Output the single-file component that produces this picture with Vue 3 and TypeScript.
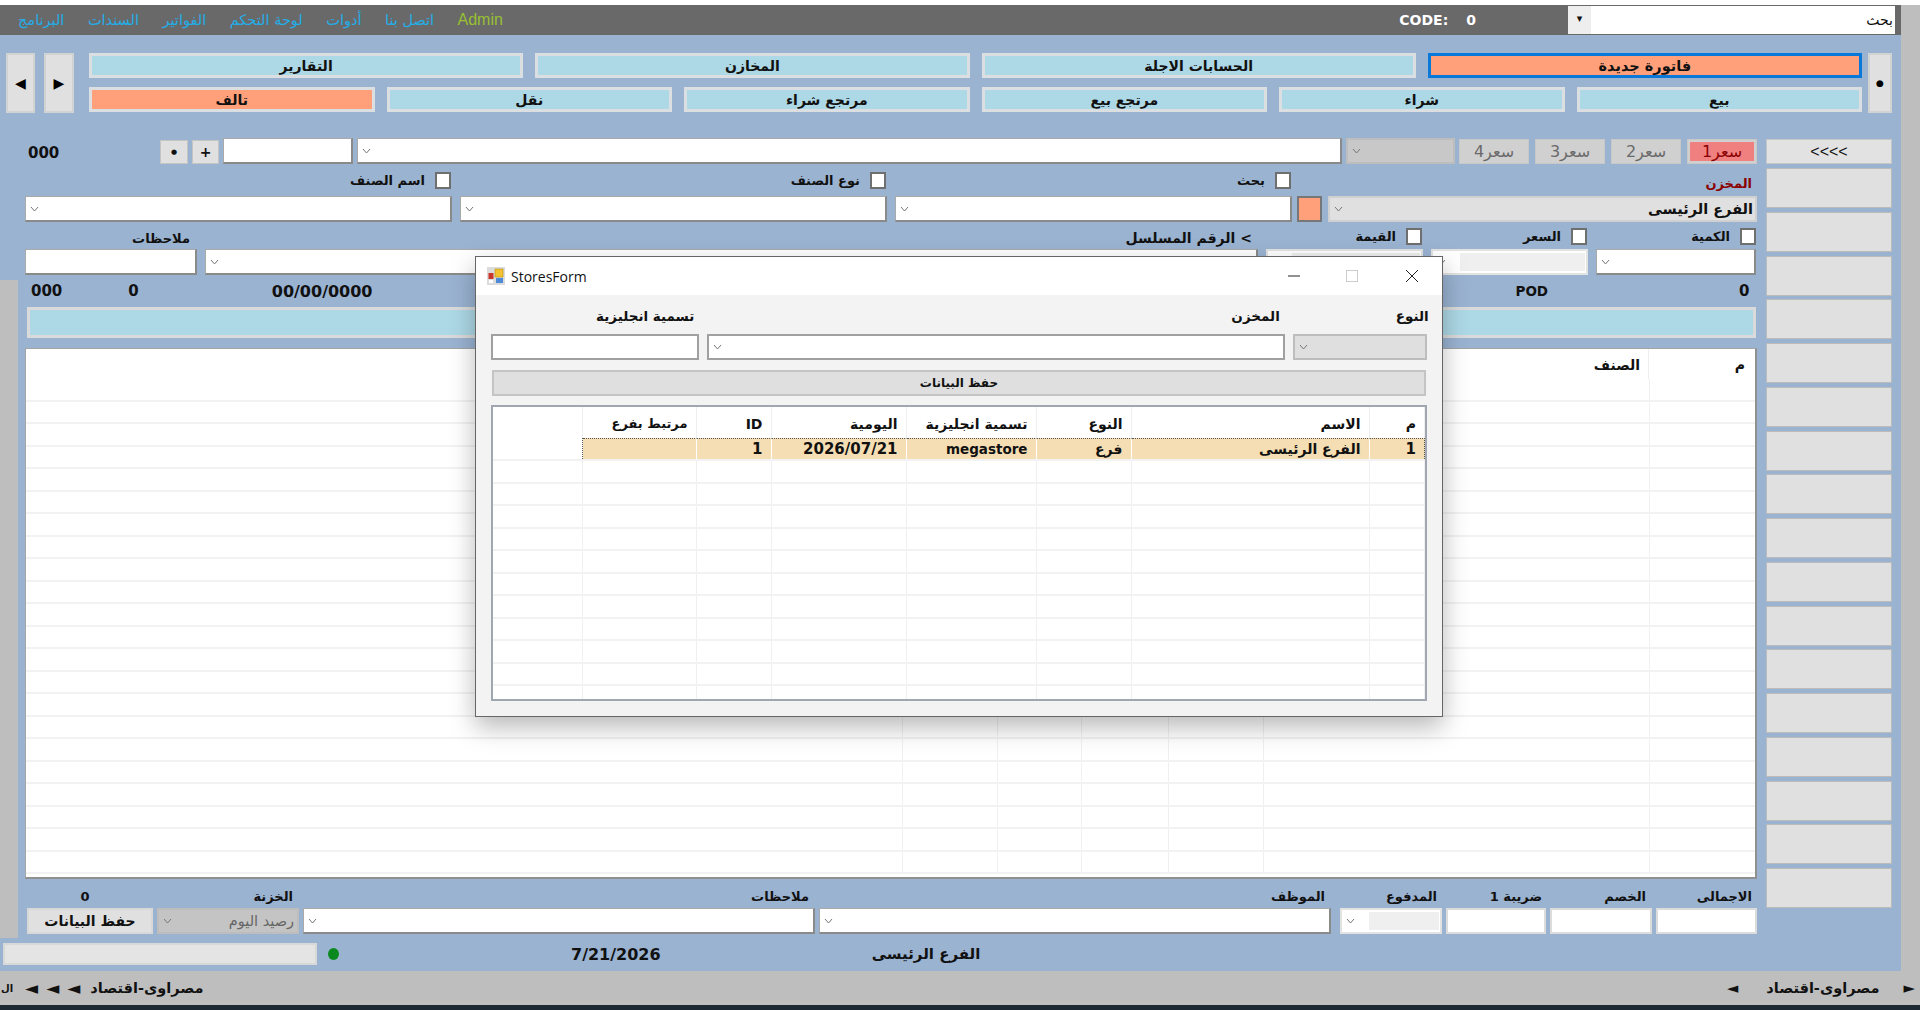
<script setup lang="ts">
const menu = ["البرنامج", "السندات", "الفواتير", "لوحة التحكم", "أدوات", "اتصل بنا"];
const topRow = ["التقارير", "المخازن", "الحسابات الاجلة", "فاتورة جديدة"];
const subRow = ["تالف", "نقل", "مرتجع شراء", "مرتجع بيع", "شراء", "بيع"];
const prices = ["سعر4", "سعر3", "سعر2", "سعر1"];
const sideButtons = Array.from({ length: 17 }, (_, i) => i);

const gridRows = Array.from({ length: 22 }, (_, i) => i);
const gridCols = 7;

const storeHead = ["", "مرتبط بفرع", "ID", "اليومية", "تسمية انجليزية", "النوع", "الاسم", "م"];
const storeRow = ["", "", "1", "2026/07/21", "megastore", "فرع", "الفرع الرئيسى", "1"];
const storeEmpty = Array.from({ length: 11 }, (_, i) => i);

const footLabels = [
  { text: "0", cls: "center" },
  { text: "الخزنة", cls: "pr6" },
  { text: "ملاحظات", cls: "pr6" },
  { text: "الموظف", cls: "pr6" },
  { text: "المدفوع", cls: "pr5" },
  { text: "ضريبة 1", cls: "pr4" },
  { text: "الخصم", cls: "pr6" },
  { text: "الاجمالى", cls: "pr5" },
];
</script>

<template>
  <div class="page">
    <div class="shell">
      <div class="left">
        <header class="topbar">
          <nav class="menu">
            <a v-for="m in menu" :key="m">{{ m }}</a>
            <a class="admin">Admin</a>
          </nav>
          <div class="code"><b>CODE:</b><b>0</b></div>
          <div class="search">
            <span class="drop">▾</span>
            <span class="search-text">بحث</span>
          </div>
        </header>

        <main class="main">
          <section class="toolbar">
            <button class="btn nav first">◀</button>
            <button class="btn nav second">▶</button>
            <div class="tool-rows">
              <div class="tools four">
                <button
                  v-for="(t, i) in topRow"
                  :key="t"
                  class="tool"
                  :class="{ focused: i === 3 }"
                >
                  {{ t }}
                </button>
              </div>
              <div class="tools six">
                <button
                  v-for="(t, i) in subRow"
                  :key="t"
                  class="tool"
                  :class="{ salmon: i === 0 }"
                >
                  {{ t }}
                </button>
              </div>
            </div>
            <button class="btn nav dot">●</button>
          </section>

          <section class="work">
            <div class="form">
              <div class="row row-a">
                <b class="num code-a">000</b>
                <button class="btn small w28">●</button>
                <button class="btn small w27 plus">+</button>
                <input class="field w130" />
                <div class="combo w985"><svg class="chev" viewBox="0 0 9 6"><path d="M1 1l3.5 4L8 1" /></svg></div>
                <div class="combo off w109"><svg class="chev" viewBox="0 0 9 6"><path d="M1 1l3.5 4L8 1" /></svg></div>
                <div class="prices">
                  <button v-for="(p, i) in prices" :key="p" class="price" :class="{ on: i === 3 }">
                    <span>{{ p }}</span>
                  </button>
                </div>
              </div>

              <div class="row row-b">
                <label class="check w427"><span class="txt">اسم الصنف</span><input type="checkbox" /></label>
                <label class="check w427"><span class="txt">نوع الصنف</span><input type="checkbox" /></label>
                <label class="check w397"><span class="txt">بحث</span><input type="checkbox" /></label>
                <span class="store-label txt">المخزن</span>
              </div>

              <div class="row row-c">
                <div class="combo w427"><svg class="chev" viewBox="0 0 9 6"><path d="M1 1l3.5 4L8 1" /></svg></div>
                <div class="combo w427"><svg class="chev" viewBox="0 0 9 6"><path d="M1 1l3.5 4L8 1" /></svg></div>
                <div class="combo w397"><svg class="chev" viewBox="0 0 9 6"><path d="M1 1l3.5 4L8 1" /></svg></div>
                <span class="swatch"></span>
                <div class="combo off w429">
                  <svg class="chev" viewBox="0 0 9 6"><path d="M1 1l3.5 4L8 1" /></svg>
                  <b class="txt combo-value">الفرع الرئيسى</b>
                </div>
              </div>

              <div class="row row-d">
                <b class="lbl txt w172 pr7 note">ملاحظات</b>
                <b class="lbl txt w1061 pr6 serial">> الرقم المسلسل</b>
                <label class="check w165"><span class="txt">القيمة</span><input type="checkbox" /></label>
                <label class="check w165"><span class="txt">السعر</span><input type="checkbox" /></label>
                <label class="check w169"><span class="txt">الكمية</span><input type="checkbox" /></label>
              </div>

              <div class="row row-e">
                <input class="field w172" />
                <div class="combo w1053"><svg class="chev" viewBox="0 0 9 6"><path d="M1 1l3.5 4L8 1" /></svg></div>
                <div class="combo w157 dim"><i></i></div>
                <div class="combo w157 dim">
                  <svg class="chev" viewBox="0 0 9 6"><path d="M1 1l3.5 4L8 1" /></svg><i></i>
                </div>
                <div class="combo w160"><svg class="chev" viewBox="0 0 9 6"><path d="M1 1l3.5 4L8 1" /></svg></div>
              </div>

              <div class="row row-f">
                <b class="num f1">000</b>
                <b class="num f2">0</b>
                <b class="num f3">00/00/0000</b>
                <b class="num f4">POD</b>
                <b class="num f5">0</b>
              </div>

              <div class="row band"></div>

              <div class="row sheet">
                <div class="sheet-head">
                  <b class="txt sheet-name">الصنف</b>
                  <b class="txt sheet-no">م</b>
                </div>
                <div v-for="r in gridRows" :key="r" class="sheet-row">
                  <span v-for="c in gridCols" :key="c"></span>
                </div>
              </div>

              <div class="row foot">
                <b v-for="l in footLabels" :key="l.text" class="lbl txt" :class="l.cls">{{ l.text }}</b>
                <button class="btn save">حفظ البيانات</button>
                <div class="combo off">
                  <svg class="chev" viewBox="0 0 9 6"><path d="M1 1l3.5 4L8 1" /></svg>
                  <span class="txt balance">رصيد اليوم</span>
                </div>
                <div class="combo"><svg class="chev" viewBox="0 0 9 6"><path d="M1 1l3.5 4L8 1" /></svg></div>
                <div class="combo"><svg class="chev" viewBox="0 0 9 6"><path d="M1 1l3.5 4L8 1" /></svg></div>
                <div class="combo dim ml5">
                  <svg class="chev" viewBox="0 0 9 6"><path d="M1 1l3.5 4L8 1" /></svg><i></i>
                </div>
                <input class="field light" />
                <input class="field light" />
                <input class="field light" />
              </div>

              <div class="status">
                <span class="status-box"></span>
                <span class="led"></span>
                <b class="num status-date">7/21/2026</b>
                <b class="txt status-branch">الفرع الرئيسى</b>
              </div>
            </div>

            <aside class="side">
              <button class="side-top">&lt;&lt;&lt;&lt;</button>
              <div class="side-list">
                <button v-for="s in sideButtons" :key="s"></button>
              </div>
            </aside>
          </section>
        </main>
      </div>
    </div>

    <footer class="ticker">
      <div class="tick-group">
        <b class="txt edge">ال</b>
        <span class="arrows">◄◄◄</span>
        <b class="txt">مصراوى-اقتصاد</b>
      </div>
      <div class="tick-group right">
        <span class="arrow">◄</span>
        <b class="txt tick-name">مصراوى-اقتصاد</b>
        <span class="arrow">►</span>
      </div>
    </footer>
    <div class="taskbar"></div>

    <div class="window">
      <div class="win-title">
        <svg class="win-icon" viewBox="0 0 18 18">
          <rect width="18" height="18" fill="#dcdcdc" />
          <rect x="8" y="2" width="8" height="8" fill="#f2c230" stroke="#b98d10" stroke-width=".6" />
          <rect x="9" y="11" width="7" height="5" fill="#4f8ad8" />
          <rect x="1.5" y="6" width="5" height="6" fill="#c9352b" />
          <rect x="2" y="13" width="4" height="3" fill="#fff" />
        </svg>
        <span class="win-name">StoresForm</span>
        <svg class="win-ctl" viewBox="0 0 12 12"><path d="M0 6h12" stroke="#222" /></svg>
        <svg class="win-ctl max" viewBox="0 0 12 12"><rect x=".5" y=".5" width="11" height="11" fill="none" stroke="#ccc" /></svg>
        <svg class="win-ctl close" viewBox="0 0 12 12"><path d="M0 0l12 12M12 0L0 12" stroke="#222" /></svg>
      </div>
      <div class="win-body">
        <div class="win-labels">
          <b class="txt wl1">تسمية انجليزية</b>
          <b class="txt wl2">المخزن</b>
          <b class="txt wl3">النوع</b>
        </div>
        <div class="win-fields">
          <input class="field deep wf1" />
          <div class="combo deep wf2"><svg class="chev" viewBox="0 0 9 6"><path d="M1 1l3.5 4L8 1" /></svg></div>
          <div class="combo off wf3"><svg class="chev" viewBox="0 0 9 6"><path d="M1 1l3.5 4L8 1" /></svg></div>
        </div>
        <button class="win-save">حفظ البيانات</button>
        <div class="stores">
          <div class="st-row st-head">
            <b v-for="(h, i) in storeHead" :key="i" class="txt">{{ h }}</b>
          </div>
          <div class="st-row st-sel">
            <b v-for="(v, i) in storeRow" :key="i" class="txt">{{ v }}</b>
          </div>
          <div v-for="r in storeEmpty" :key="r" class="st-row st-empty">
            <span v-for="c in 8" :key="c"></span>
          </div>
        </div>
      </div>
    </div>
  </div>
</template>

<style>
html,
body {
  margin: 0;
  background: #fff;
}
</style>

<style scoped>
.page {
  position: relative;
  width: 1920px;
  height: 1010px;
  overflow: hidden;
  display: flex;
  flex-direction: column;
  font-family: "DejaVu Sans", sans-serif;
  font-size: 12px;
  color: #111;
  background: #fff;
}
.txt {
  unicode-bidi: plaintext;
}
button {
  font-family: inherit;
  padding: 0;
  color: #111;
}

.shell {
  margin-top: 5px;
  display: flex;
  background: #bebebe;
}
.left {
  width: 1901px;
}
.topbar {
  height: 30px;
  background: #696969;
  display: flex;
  align-items: center;
}
.menu {
  display: flex;
  align-items: center;
  gap: 23.5px;
  padding-left: 18px;
  font-size: 14.5px;
  color: #23aee8;
}
.admin {
  color: #98c032;
  font-family: "Liberation Sans", sans-serif;
  font-size: 16px;
}
.code {
  margin-left: auto;
  display: flex;
  gap: 18px;
  color: #fff;
  font-size: 14px;
  margin-right: 92px;
}
.search {
  width: 327px;
  height: 28px;
  background: #fff;
  margin-right: 6px;
  display: flex;
  align-items: center;
  justify-content: space-between;
}
.drop {
  width: 23px;
  height: 28px;
  line-height: 26px;
  text-align: center;
  background: #eee;
  font-size: 11px;
}
.search-text {
  font-size: 14px;
  padding-right: 2px;
}

.main {
  height: 936px;
  background-color: #9ab3d1;
  background-image: linear-gradient(#bebebe, #bebebe);
  background-repeat: no-repeat;
  background-position: 0 245px;
  background-size: 18px 658px;
}
.toolbar {
  display: flex;
  padding: 18px 0 0 6px;
  height: 60px;
}
.btn {
  background: #e0e0e0;
  border: 1px solid #d2d2d2;
}
.nav {
  width: 29px;
  height: 60px;
  font-size: 14px;
  color: #000;
  border-width: 2px;
}
.second {
  width: 30px;
  margin-left: 9px;
  margin-right: 15px;
}
.dot {
  width: 24px;
  margin-left: 6px;
  font-size: 9px;
}
.tool-rows {
  width: 1773px;
  display: flex;
  flex-direction: column;
  gap: 9px;
}
.tools {
  display: grid;
  gap: 12px;
}
.four {
  grid-template-columns: repeat(4, 1fr);
}
.six {
  grid-template-columns: repeat(6, 1fr);
}
.tool {
  height: 25px;
  background: #add8e6;
  border: 3px solid #dcdfe2;
  font-size: 14px;
  font-weight: 700;
}
.tool.focused {
  background: #ffa07a;
  border-color: #0a78d8;
  font-size: 14.5px;
}
.tool.salmon {
  background: #ffa07a;
}

.work {
  display: flex;
  margin-top: 25px;
}
.form {
  width: 1757px;
}
.row {
  margin-left: 25px;
  width: 1732px;
  display: flex;
}
.field,
.combo {
  box-sizing: border-box;
  height: 26px;
  background: #fff;
  border: 1px solid #a9a9a9;
  border-right: 2px solid #8a8a8a;
  border-bottom: 2px solid #8a8a8a;
  outline: none;
  padding: 0;
  margin: 0;
}
.field.light {
  border: 2px solid #dcdcdc;
}
.combo {
  display: flex;
  align-items: center;
  position: relative;
}
.chev {
  width: 9px;
  height: 6px;
  margin-left: 4px;
  flex: none;
  fill: none;
  stroke: #777;
  stroke-width: 1;
}
.combo.off {
  background: #c8c8c8;
  border: 2px solid #bdbdbd;
  color: #555;
}
.combo.dim {
  background: #fff;
  border: 2px solid #e2e2e2;
}
.combo.dim i {
  flex: 1;
  height: 18px;
  margin: 0 1px 0 14px;
  background: #efefef;
}
.combo.dim > i:only-child {
  margin-left: 24px;
}
.num {
  font-size: 15px;
}
.lbl {
  font-size: 13px;
}
.pr4 { padding-right: 4px; text-align: right; }
.pr5 { padding-right: 5px; text-align: right; }
.pr6 { padding-right: 6px; text-align: right; }
.pr7 { padding-right: 7px; text-align: right; }
.center { text-align: center; padding-right: 10px; }

.row-a {
  align-items: flex-end;
  gap: 4px;
  height: 26px;
}
.code-a {
  width: 131px;
  padding: 3px 0 0 3px;
  box-sizing: border-box;
  align-self: center;
}
.small {
  height: 24px;
  font-size: 14px;
  font-weight: 700;
  border: 1px solid #c4c4c4;
}
.w28 { width: 28px; font-size: 7px; }
.w27 { width: 27px; }
.w130 { width: 130px; }
.w985 { width: 985px; }
.w109 { width: 109px; }
.prices {
  display: flex;
  gap: 6px;
}
.price {
  width: 70px;
  height: 25px;
  background: #d0d0d0;
  border: 1px solid #c8c8c8;
  color: #6a6a6a;
  font-size: 16px;
  padding: 2px;
}
.price span {
  display: block;
  height: 100%;
  line-height: 19px;
  unicode-bidi: plaintext;
}
.price.on span {
  background: #f08080;
  color: #8b0000;
}

.row-b {
  margin-top: 8px;
  height: 17px;
}
.check {
  box-sizing: border-box;
  display: flex;
  justify-content: flex-end;
  align-items: center;
  gap: 10px;
  font-weight: 700;
  font-size: 13px;
}
.check input {
  appearance: none;
  box-sizing: border-box;
  width: 16px;
  height: 17px;
  margin: 0 1px 0 0;
  background: #fff;
  border: 2px solid #6f6f6f;
}
.w427 { width: 427px; }
.w397 { width: 397px; }
.w429 { width: 429px; }
.row-b .w427 { margin-right: 8px; }
.store-label {
  margin-left: auto;
  margin-right: 5px;
  color: #8b0000;
  font-size: 13px;
  font-weight: 700;
  padding-top: 3px;
  line-height: 17px;
}
.row-c {
  margin-top: 7px;
}
.row-c .w427 {
  margin-right: 8px;
}
.swatch {
  box-sizing: border-box;
  width: 25px;
  height: 26px;
  margin: 0 6px 0 5px;
  background: #ffa07a;
  border: 2px solid #777;
}
.combo.off.w429 {
  background: #e0e0e0;
  border-color: #d0d0d0;
  color: #111;
}
.combo-value {
  margin-left: auto;
  padding-right: 2px;
  font-size: 14.5px;
}
.row-d {
  margin-top: 6px;
  height: 17px;
  align-items: center;
}
.note {
  padding-top: 4px;
}
.serial {
  font-size: 14px;
  padding-top: 2px;
}
.w172 { width: 172px; box-sizing: border-box; }
.w1061 { width: 1061px; box-sizing: border-box; }
.w165 { width: 165px; }
.w169 { width: 169px; }
.row-e {
  margin-top: 4px;
  gap: 8px;
}
.w1053 { width: 1053px; }
.w157 { width: 157px; }
.w160 { width: 160px; }
.row-f {
  margin-top: 7px;
  height: 18px;
  align-items: center;
}
.f1 { margin-left: 6px; }
.f2 { margin-left: 66px; }
.f3 { margin-left: 133px; font-size: 16px; }
.f4 { margin-left: 1143px; font-size: 13.5px; }
.f5 { margin-left: 191px; }
.band {
  box-sizing: border-box;
  margin-top: 7px;
  margin-left: 27px;
  width: 1729px;
  height: 31px;
  background: #add8e6;
  border: 3px solid #dadada;
}
.sheet {
  box-sizing: border-box;
  margin-top: 10px;
  height: 531px;
  flex-direction: column;
  background: #fff;
  border: 1px solid #a4a4a4;
  border-right: 2px solid #909090;
  border-bottom: 2px solid #909090;
  overflow: hidden;
}
.sheet-head {
  flex: none;
  height: 30px;
  display: grid;
  grid-template-columns: 1fr 107px;
}
.sheet-name {
  padding: 8px 8px 0 0;
  text-align: right;
  font-size: 14px;
}
.sheet-no {
  border-left: 1px solid #eee;
  padding: 8px 10px 0 0;
  text-align: right;
  font-size: 14px;
}
.sheet-row {
  flex: none;
  height: 22.5px;
  box-sizing: border-box;
  display: grid;
  grid-template-columns: 877px 95px 84px 87px 95px 386px 1fr;
  border-bottom: 2px solid #f2f2f2;
}
.sheet-row span {
  border-right: 1px solid #f0f0f0;
}
.sheet-row span:last-child {
  border-right: 0;
}
.foot {
  margin-top: 9px;
  margin-left: 27px;
  width: 1730px;
  display: grid;
  grid-template-columns: 126px 142px 512px 512px 107px 100px 102px 101px;
  grid-template-rows: 16px 26px;
  column-gap: 4px;
  row-gap: 4px;
  align-items: center;
}
.save {
  height: 26px;
  border: 2px solid #d8d8d8;
  font-weight: 700;
  font-size: 14px;
}
.balance {
  margin-left: auto;
  padding-right: 3px;
  font-size: 14.5px;
  color: #666;
}
.foot .combo.off {
  background: #c4c4c4;
}
.ml5 {
  margin-left: 5px;
}
.status {
  margin: 9px 0 0 3px;
  display: flex;
  align-items: center;
  height: 22px;
}
.status-box {
  box-sizing: border-box;
  width: 314px;
  height: 22px;
  background: #e4e4e4;
  border: 2px solid #d8d8d8;
}
.led {
  width: 11px;
  height: 12px;
  margin-left: 11px;
  border-radius: 50%;
  background: #0a8a1e;
}
.status-date {
  margin-left: 232px;
  font-size: 16px;
}
.status-branch {
  margin-left: 211px;
  font-size: 15px;
}
.side {
  margin: 1px 0 0 9px;
  width: 126px;
}
.side-top {
  display: block;
  width: 126px;
  height: 25px;
  background: #e2e2e2;
  border: 1px solid #c6c6c6;
  font-family: "Liberation Sans", sans-serif;
  font-size: 16px;
}
.side-list {
  margin-top: 4px;
  height: 740px;
  display: flex;
  flex-direction: column;
  gap: 3.75px;
}
.side-list button {
  flex: 1;
  background: #e0e0e0;
  border: 1px solid #bbb;
}

.ticker {
  height: 34px;
  background: #bebebe;
  display: flex;
  justify-content: space-between;
  align-items: center;
  font-size: 14.5px;
}
.tick-group {
  display: flex;
  align-items: center;
}
.edge {
  font-size: 10px;
  padding-left: 1px;
}
.arrows {
  margin-left: 12px;
  margin-right: 2px;
  letter-spacing: 8px;
  font-size: 17px;
}
.tick-group.right {
  gap: 26px;
  padding-right: 5px;
}
.tick-name {
  margin: 0 -2px 0 2px;
}
.arrow {
  font-size: 15px;
}
.taskbar {
  flex: 1;
  background: #1c2834;
}

.window {
  position: absolute;
  left: 475px;
  top: 256px;
  box-sizing: border-box;
  width: 968px;
  height: 461px;
  background: #f3f3f3;
  border: 1px solid #666;
  box-shadow: 0 10px 24px rgba(0, 0, 0, 0.28);
}
.win-title {
  height: 38px;
  background: #fff;
  display: flex;
  align-items: center;
  padding-left: 11px;
}
.win-icon {
  width: 18px;
  height: 18px;
}
.win-name {
  margin-left: 6px;
  font-family: "Open Sans", sans-serif;
  font-size: 14px;
}
.win-ctl {
  width: 12px;
  height: 12px;
  margin-left: 46px;
}
.win-ctl:nth-of-type(2) {
  margin-left: auto;
}
.win-ctl.close {
  margin-left: 48px;
  margin-right: 24px;
}
.win-body {
  padding: 0 15px;
}
.win-labels {
  box-sizing: border-box;
  height: 39px;
  padding-top: 3px;
  display: flex;
  align-items: center;
  font-size: 13.5px;
  white-space: nowrap;
}
.wl1 { margin-left: 105px; }
.wl2 { margin-left: 537px; }
.wl3 { margin-left: 116px; }
.win-fields {
  display: flex;
  gap: 8px;
}
.field.deep,
.combo.deep {
  border: 2px solid #a0a0a0;
}
.wf1 { width: 208px; }
.wf2 { width: 578px; }
.combo.off.wf3 {
  width: 134px;
  background: #dfdfdf;
}
.win-save {
  display: block;
  width: 934px;
  height: 26px;
  margin: 10px 0 9px 1px;
  background: #dfdfdf;
  border: 2px solid #c4c4c4;
  font-weight: 700;
  font-size: 12px;
}
.stores {
  box-sizing: border-box;
  width: 936px;
  height: 296px;
  background: #fff;
  border: 2px solid #a0a7b0;
  overflow: hidden;
}
.st-row {
  display: grid;
  grid-template-columns: 90px 113.5px 75px 135px 130px 95px 238px 1fr;
}
.st-head {
  height: 31px;
}
.st-head b {
  text-align: right;
  padding: 9px 8px 0 0;
  font-size: 14px;
  border-right: 1px solid #efefef;
  direction: rtl;
  white-space: nowrap;
}
.st-head b:nth-child(2) {
  font-size: 13px;
}
.st-sel {
  height: 21px;
}
.st-sel b {
  background: #f5deb3;
  text-align: right;
  line-height: 20px;
  padding-right: 8px;
  font-size: 14px;
  border-right: 1px solid #fff;
  border-top: 1px dotted #555;
  white-space: nowrap;
}
.st-sel b:nth-child(3),
.st-sel b:nth-child(4),
.st-sel b:nth-child(8) {
  font-size: 15px;
}
.st-sel b:nth-child(5) {
  font-size: 13.5px;
}
.st-sel b:first-child {
  background: #fff;
  border-top: 0;
  border-right: 1px dotted #555;
}
.st-sel b:last-child {
  border-right: 1px dotted #555;
}
.st-empty {
  height: 22.5px;
  box-sizing: border-box;
  border-top: 2px solid #f2f2f2;
}
.st-empty span {
  border-right: 1px solid #f0f0f0;
}
</style>
